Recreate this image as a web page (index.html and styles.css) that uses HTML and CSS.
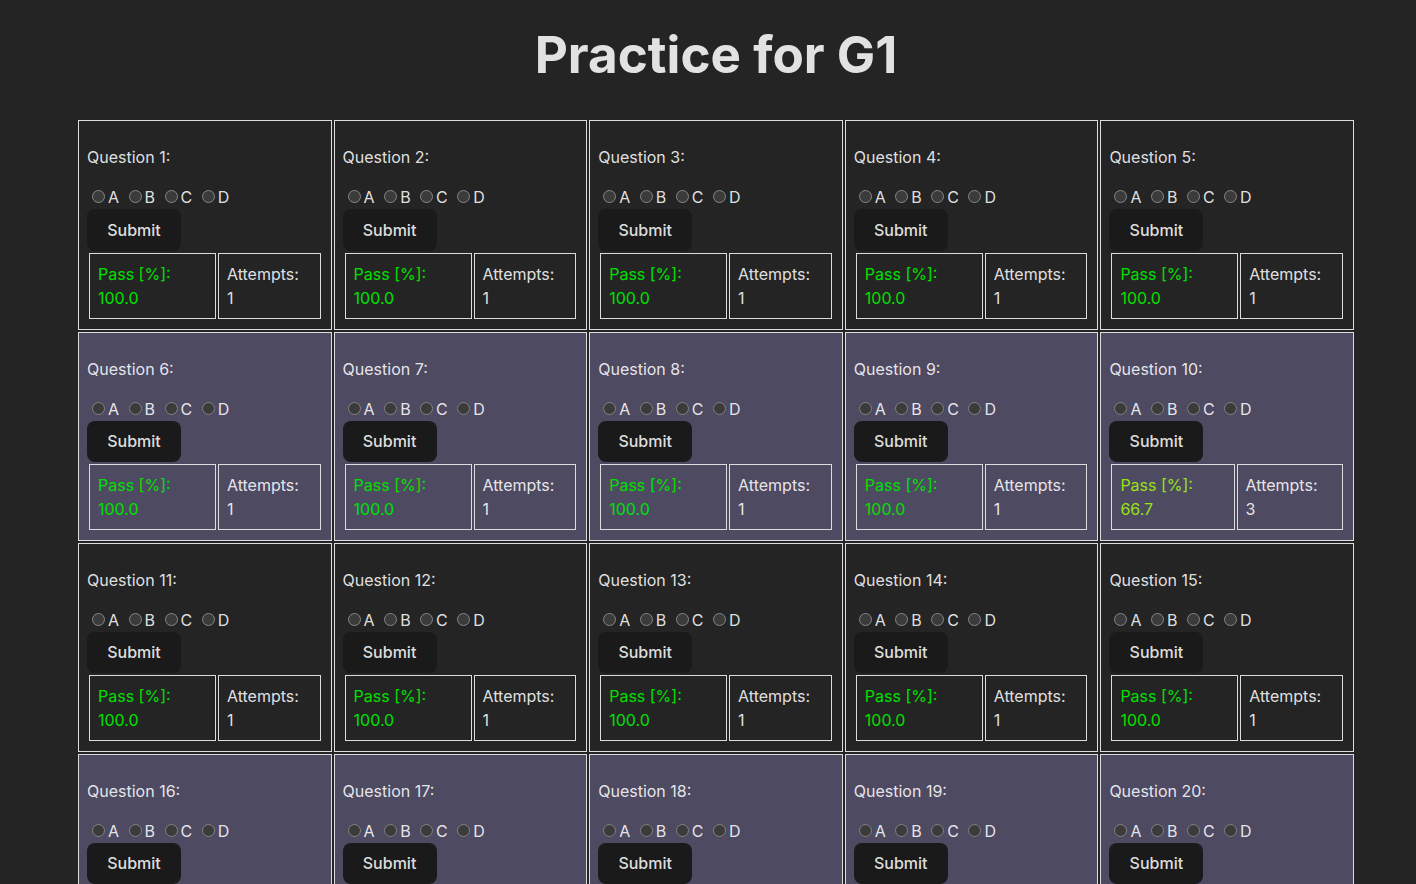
FILE: index.html
```html
<!DOCTYPE html>
<html lang="en">
<head>
<meta charset="utf-8">
<title>Practice for G1</title>
<link rel="stylesheet" href="styles.css">
</head>
<body>
<div class="app">
<h1 class="title">Practice for G1</h1>
<table class="grid">
<tbody>
<tr class="row">
<td class="q-cell"><p class="q-label">Question 1:</p><div class="choices"><input type="radio" name="q1" class="radio">A <input type="radio" name="q1" class="radio">B <input type="radio" name="q1" class="radio">C <input type="radio" name="q1" class="radio">D</div><button class="submit">Submit</button><table class="stats"><tr><td class="stat pass">Pass [%]: 100.0</td><td class="stat attempts">Attempts: 1</td></tr></table></td>
<td class="q-cell"><p class="q-label">Question 2:</p><div class="choices"><input type="radio" name="q2" class="radio">A <input type="radio" name="q2" class="radio">B <input type="radio" name="q2" class="radio">C <input type="radio" name="q2" class="radio">D</div><button class="submit">Submit</button><table class="stats"><tr><td class="stat pass">Pass [%]: 100.0</td><td class="stat attempts">Attempts: 1</td></tr></table></td>
<td class="q-cell"><p class="q-label">Question 3:</p><div class="choices"><input type="radio" name="q3" class="radio">A <input type="radio" name="q3" class="radio">B <input type="radio" name="q3" class="radio">C <input type="radio" name="q3" class="radio">D</div><button class="submit">Submit</button><table class="stats"><tr><td class="stat pass">Pass [%]: 100.0</td><td class="stat attempts">Attempts: 1</td></tr></table></td>
<td class="q-cell"><p class="q-label">Question 4:</p><div class="choices"><input type="radio" name="q4" class="radio">A <input type="radio" name="q4" class="radio">B <input type="radio" name="q4" class="radio">C <input type="radio" name="q4" class="radio">D</div><button class="submit">Submit</button><table class="stats"><tr><td class="stat pass">Pass [%]: 100.0</td><td class="stat attempts">Attempts: 1</td></tr></table></td>
<td class="q-cell"><p class="q-label">Question 5:</p><div class="choices"><input type="radio" name="q5" class="radio">A <input type="radio" name="q5" class="radio">B <input type="radio" name="q5" class="radio">C <input type="radio" name="q5" class="radio">D</div><button class="submit">Submit</button><table class="stats"><tr><td class="stat pass">Pass [%]: 100.0</td><td class="stat attempts">Attempts: 1</td></tr></table></td>
</tr>
<tr class="row row-alt">
<td class="q-cell"><p class="q-label">Question 6:</p><div class="choices"><input type="radio" name="q6" class="radio">A <input type="radio" name="q6" class="radio">B <input type="radio" name="q6" class="radio">C <input type="radio" name="q6" class="radio">D</div><button class="submit">Submit</button><table class="stats"><tr><td class="stat pass">Pass [%]: 100.0</td><td class="stat attempts">Attempts: 1</td></tr></table></td>
<td class="q-cell"><p class="q-label">Question 7:</p><div class="choices"><input type="radio" name="q7" class="radio">A <input type="radio" name="q7" class="radio">B <input type="radio" name="q7" class="radio">C <input type="radio" name="q7" class="radio">D</div><button class="submit">Submit</button><table class="stats"><tr><td class="stat pass">Pass [%]: 100.0</td><td class="stat attempts">Attempts: 1</td></tr></table></td>
<td class="q-cell"><p class="q-label">Question 8:</p><div class="choices"><input type="radio" name="q8" class="radio">A <input type="radio" name="q8" class="radio">B <input type="radio" name="q8" class="radio">C <input type="radio" name="q8" class="radio">D</div><button class="submit">Submit</button><table class="stats"><tr><td class="stat pass">Pass [%]: 100.0</td><td class="stat attempts">Attempts: 1</td></tr></table></td>
<td class="q-cell"><p class="q-label">Question 9:</p><div class="choices"><input type="radio" name="q9" class="radio">A <input type="radio" name="q9" class="radio">B <input type="radio" name="q9" class="radio">C <input type="radio" name="q9" class="radio">D</div><button class="submit">Submit</button><table class="stats"><tr><td class="stat pass">Pass [%]: 100.0</td><td class="stat attempts">Attempts: 1</td></tr></table></td>
<td class="q-cell"><p class="q-label">Question 10:</p><div class="choices"><input type="radio" name="q10" class="radio">A <input type="radio" name="q10" class="radio">B <input type="radio" name="q10" class="radio">C <input type="radio" name="q10" class="radio">D</div><button class="submit">Submit</button><table class="stats"><tr><td class="stat pass-mid">Pass [%]: 66.7</td><td class="stat attempts">Attempts: 3</td></tr></table></td>
</tr>
<tr class="row">
<td class="q-cell"><p class="q-label">Question 11:</p><div class="choices"><input type="radio" name="q11" class="radio">A <input type="radio" name="q11" class="radio">B <input type="radio" name="q11" class="radio">C <input type="radio" name="q11" class="radio">D</div><button class="submit">Submit</button><table class="stats"><tr><td class="stat pass">Pass [%]: 100.0</td><td class="stat attempts">Attempts: 1</td></tr></table></td>
<td class="q-cell"><p class="q-label">Question 12:</p><div class="choices"><input type="radio" name="q12" class="radio">A <input type="radio" name="q12" class="radio">B <input type="radio" name="q12" class="radio">C <input type="radio" name="q12" class="radio">D</div><button class="submit">Submit</button><table class="stats"><tr><td class="stat pass">Pass [%]: 100.0</td><td class="stat attempts">Attempts: 1</td></tr></table></td>
<td class="q-cell"><p class="q-label">Question 13:</p><div class="choices"><input type="radio" name="q13" class="radio">A <input type="radio" name="q13" class="radio">B <input type="radio" name="q13" class="radio">C <input type="radio" name="q13" class="radio">D</div><button class="submit">Submit</button><table class="stats"><tr><td class="stat pass">Pass [%]: 100.0</td><td class="stat attempts">Attempts: 1</td></tr></table></td>
<td class="q-cell"><p class="q-label">Question 14:</p><div class="choices"><input type="radio" name="q14" class="radio">A <input type="radio" name="q14" class="radio">B <input type="radio" name="q14" class="radio">C <input type="radio" name="q14" class="radio">D</div><button class="submit">Submit</button><table class="stats"><tr><td class="stat pass">Pass [%]: 100.0</td><td class="stat attempts">Attempts: 1</td></tr></table></td>
<td class="q-cell"><p class="q-label">Question 15:</p><div class="choices"><input type="radio" name="q15" class="radio">A <input type="radio" name="q15" class="radio">B <input type="radio" name="q15" class="radio">C <input type="radio" name="q15" class="radio">D</div><button class="submit">Submit</button><table class="stats"><tr><td class="stat pass">Pass [%]: 100.0</td><td class="stat attempts">Attempts: 1</td></tr></table></td>
</tr>
<tr class="row row-alt">
<td class="q-cell"><p class="q-label">Question 16:</p><div class="choices"><input type="radio" name="q16" class="radio">A <input type="radio" name="q16" class="radio">B <input type="radio" name="q16" class="radio">C <input type="radio" name="q16" class="radio">D</div><button class="submit">Submit</button><table class="stats"><tr><td class="stat pass">Pass [%]: 100.0</td><td class="stat attempts">Attempts: 1</td></tr></table></td>
<td class="q-cell"><p class="q-label">Question 17:</p><div class="choices"><input type="radio" name="q17" class="radio">A <input type="radio" name="q17" class="radio">B <input type="radio" name="q17" class="radio">C <input type="radio" name="q17" class="radio">D</div><button class="submit">Submit</button><table class="stats"><tr><td class="stat pass">Pass [%]: 100.0</td><td class="stat attempts">Attempts: 1</td></tr></table></td>
<td class="q-cell"><p class="q-label">Question 18:</p><div class="choices"><input type="radio" name="q18" class="radio">A <input type="radio" name="q18" class="radio">B <input type="radio" name="q18" class="radio">C <input type="radio" name="q18" class="radio">D</div><button class="submit">Submit</button><table class="stats"><tr><td class="stat pass">Pass [%]: 100.0</td><td class="stat attempts">Attempts: 1</td></tr></table></td>
<td class="q-cell"><p class="q-label">Question 19:</p><div class="choices"><input type="radio" name="q19" class="radio">A <input type="radio" name="q19" class="radio">B <input type="radio" name="q19" class="radio">C <input type="radio" name="q19" class="radio">D</div><button class="submit">Submit</button><table class="stats"><tr><td class="stat pass">Pass [%]: 100.0</td><td class="stat attempts">Attempts: 1</td></tr></table></td>
<td class="q-cell"><p class="q-label">Question 20:</p><div class="choices"><input type="radio" name="q20" class="radio">A <input type="radio" name="q20" class="radio">B <input type="radio" name="q20" class="radio">C <input type="radio" name="q20" class="radio">D</div><button class="submit">Submit</button><table class="stats"><tr><td class="stat pass">Pass [%]: 100.0</td><td class="stat attempts">Attempts: 1</td></tr></table></td>
</tr>
</tbody>
</table>
</div>
</body>
</html>
```
FILE: styles.css
```css
:root {
  font-family: Inter, "Noto Sans", "Liberation Sans", sans-serif;
  line-height: 1.5;
  font-weight: 400;
  color-scheme: dark;
  color: rgba(255, 255, 255, 0.87);
  background-color: #242424;
}

body {
  margin: 0;
  padding-left: 16px;
  min-height: 100vh;
}

.app {
  width: 1280px;
  margin: 0 auto;
  padding-top: 26px;
}

.title {
  margin: 0 0 36px;
  font-size: 51.2px;
  line-height: 1.1;
  font-weight: 700;
  text-align: center;
}

.grid {
  width: 100%;
  border-spacing: 2px;
}

.row-alt {
  background-color: #4e4a62;
}

.q-cell {
  border: 1px solid #dcdcdc;
  padding: 8px;
  vertical-align: middle;
  text-align: left;
}

.q-label {
  margin: 16px 0;
}

.choices {
  height: 24px;
  line-height: 24px;
}

.radio {
  width: 13px;
  height: 13px;
  margin: 3px 3px 0 5px;
}

.submit {
  display: block;
  border-radius: 8px;
  border: 1px solid transparent;
  padding: 0.6em 1.2em;
  font-size: 1em;
  font-weight: 500;
  font-family: inherit;
  background-color: #1a1a1a;
  color: rgba(255, 255, 255, 0.87);
  cursor: pointer;
}

.stats {
  width: 100%;
  border-spacing: 2px;
}

.stat {
  border: 1px solid #dcdcdc;
  padding: 8px;
  text-align: left;
  vertical-align: middle;
}

.attempts {
  padding-right: 11px;
}

.pass {
  color: #00e000;
}

.pass-mid {
  color: #99e214;
}
```
